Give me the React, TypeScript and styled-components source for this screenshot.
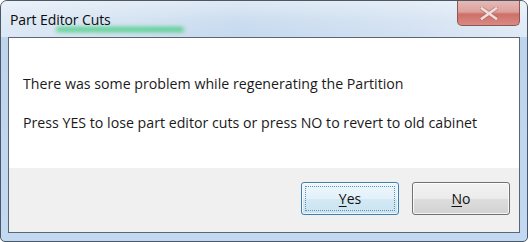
import React from "react";
import styled, { createGlobalStyle } from "styled-components";

const GlobalStyle = createGlobalStyle`
  html, body {
    margin: 0;
    padding: 0;
    background: #ffffff;
  }
  body {
    font-family: "Open Sans", "Noto Sans", sans-serif;
  }
`;

const Window = styled.div`
  box-sizing: border-box;
  width: 528px;
  height: 242px;
  border: 1px solid #4a5866;
  border-radius: 7px 7px 5px 5px;
  background: linear-gradient(
    to bottom,
    #dbe7f4 0px,
    #c6d9ee 20px,
    #bed4ec 40px,
    #c3d9f1 100%
  );
  padding: 0 7px 8px 7px;
  display: flex;
  flex-direction: column;
  overflow: hidden;
`;

const TitleBar = styled.div`
  position: relative;
  height: 36px;
  display: flex;
  justify-content: space-between;
  align-items: flex-start;
  background: linear-gradient(
    to right,
    rgba(255, 255, 255, 0.45) 0%,
    rgba(255, 255, 255, 0.1) 45%,
    rgba(255, 255, 255, 0.3) 80%,
    rgba(255, 255, 255, 0.5) 100%
  );
  margin: 0 -7px;
  padding: 0 7px;
`;

const Title = styled.div`
  margin-top: 9px;
  margin-left: 2px;
  font-size: 14px;
  color: #0b0b0b;
  letter-spacing: -0.1px;
`;

const Glow = styled.div`
  position: absolute;
  left: 55px;
  top: 26px;
  width: 128px;
  height: 5px;
  border-radius: 3px;
  background: #36cc72;
  filter: blur(2px);
  opacity: 0.8;
`;

const CloseButton = styled.div`
  box-sizing: border-box;
  width: 63px;
  height: 25px;
  border: 1px solid #8e5552;
  border-top: none;
  border-radius: 0 0 5px 5px;
  background: linear-gradient(
    to bottom,
    #e6b9b5 0%,
    #dca19c 45%,
    #cf6f68 55%,
    #d88a84 100%
  );
  display: flex;
  align-items: center;
  justify-content: center;
`;

const Client = styled.div`
  flex: 1;
  display: flex;
  flex-direction: column;
  border: 1px solid #5a6674;
  background: #f0f0f0;
`;

const Content = styled.div`
  height: 130px;
  background: #ffffff;
  box-sizing: border-box;
  padding: 35px 0 0 14px;
  display: flex;
  flex-direction: column;
  gap: 18px;
`;

const Message = styled.div`
  font-size: 14.2px;
  line-height: 21px;
  color: #1a1a1a;
`;

const Footer = styled.div`
  flex: 1;
  display: flex;
  justify-content: flex-end;
  align-items: flex-start;
  gap: 13px;
  padding: 14px 9px 0 0;
`;

const DialogButton = styled.button<{ $default?: boolean }>`
  box-sizing: border-box;
  width: 98px;
  height: 33px;
  padding: 0;
  border-radius: 3px;
  font-family: "Open Sans", "Noto Sans", sans-serif;
  font-size: 14px;
  color: #111;
  cursor: default;
  position: relative;
  border: 1px solid ${(p) => (p.$default ? "#3c7fb1" : "#707070")};
  background: ${(p) =>
    p.$default
      ? "linear-gradient(to bottom, #edf7fc 0%, #e2f1fa 50%, #d3e9f5 51%, #c9e3f1 100%)"
      : "linear-gradient(to bottom, #f2f2f2 0%, #ebebeb 50%, #dddddd 51%, #d2d2d2 100%)"};
  box-shadow: inset 0 0 0 1px
    ${(p) => (p.$default ? "rgba(255,255,255,0.7)" : "rgba(255,255,255,0.8)")};

  &::after {
    content: "";
    display: ${(p) => (p.$default ? "block" : "none")};
    position: absolute;
    inset: 3px;
    border: 1px dotted #6a8fa8;
  }

  u {
    text-decoration: underline;
    text-underline-offset: 2px;
  }
`;

function CloseGlyph() {
  return (
    <svg width="18" height="13" viewBox="0 0 18 13">
      <path
        d="M2 1.5 L16 11.5 M16 1.5 L2 11.5"
        stroke="#9a6a68"
        strokeWidth="4.2"
        strokeLinecap="square"
        opacity="0.55"
      />
      <path
        d="M2 1.5 L16 11.5 M16 1.5 L2 11.5"
        stroke="#f3dcda"
        strokeWidth="2.6"
        strokeLinecap="square"
      />
    </svg>
  );
}

export default function App() {
  return (
    <>
      <GlobalStyle />
      <Window>
        <TitleBar>
          <Title>Part Editor Cuts</Title>
          <Glow />
          <CloseButton>
            <CloseGlyph />
          </CloseButton>
        </TitleBar>
        <Client>
          <Content>
            <Message>There was some problem while regenerating the Partition</Message>
            <Message>
              Press YES to lose part editor cuts or press NO to revert to old cabinet
            </Message>
          </Content>
          <Footer>
            <DialogButton $default>
              <u>Y</u>es
            </DialogButton>
            <DialogButton>
              <u>N</u>o
            </DialogButton>
          </Footer>
        </Client>
      </Window>
    </>
  );
}
